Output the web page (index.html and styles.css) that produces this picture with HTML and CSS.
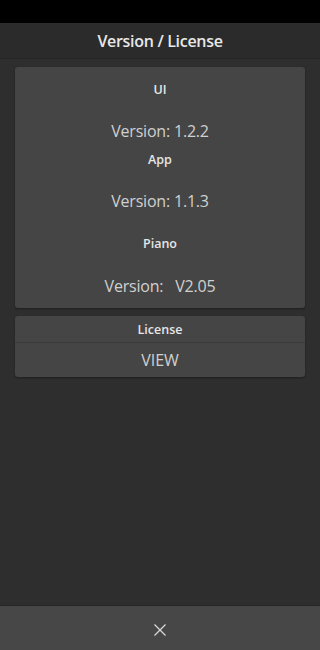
FILE: index.html
```html
<!DOCTYPE html>
<html>
<head>
<meta charset="utf-8">
<meta name="viewport" content="width=device-width, initial-scale=1">
<link rel="stylesheet" href="styles.css">
</head>
<body>
<div class="app">
  <div class="statusbar"></div>
  <header class="header">Version / License</header>
  <main class="content">
    <section class="card versions">
      <div class="label">UI</div>
      <div class="value v-ui">Version: 1.2.2</div>
      <div class="label l-app">App</div>
      <div class="value v-app">Version: 1.1.3</div>
      <div class="label l-piano">Piano</div>
      <div class="value v-piano">Version:&nbsp;&nbsp; V2.05</div>
    </section>
    <section class="card license">
      <div class="license-title">License</div>
      <div class="license-view">VIEW</div>
    </section>
  </main>
  <footer class="footer">
    <svg class="close" width="14" height="14" viewBox="0 0 14 14"><path d="M1.5 1.5 L12.5 12.5 M12.5 1.5 L1.5 12.5" stroke="#d8d8d8" stroke-width="1.3" fill="none"/></svg>
  </footer>
</div>
</body>
</html>
```
FILE: styles.css
```css
html, body {
  margin: 0;
  padding: 0;
  background: #2e2e2e;
}
.app {
  width: 100%;
  height: 650px;
  display: flex;
  flex-direction: column;
  font-family: "Open Sans", "Noto Sans", sans-serif;
  color: #e6e6e6;
}
.statusbar {
  height: 23px;
  background: #000;
  flex: none;
}
.header {
  height: 35px;
  flex: none;
  background: #2b2b2b;
  border-bottom: 1px solid #262626;
  display: flex;
  align-items: center;
  justify-content: center;
  font-size: 16px;
  font-weight: 600;
  color: #e8e8e8;
  letter-spacing: -0.3px;
}
.content {
  flex: 1;
  padding: 8px 15px 0;
  display: flex;
  flex-direction: column;
  gap: 8px;
}
.card {
  background: #454545;
  border-radius: 3px;
  box-shadow: 0 1px 2px rgba(0,0,0,0.35);
}
.versions {
  height: 241px;
  display: flex;
  flex-direction: column;
  align-items: center;
  padding-top: 14px;
  box-sizing: border-box;
}
.label {
  font-size: 12.5px;
  font-weight: 600;
  line-height: 18px;
  color: #e6e6e6;
}
.value {
  font-size: 16px;
  line-height: 22px;
  color: #d0d0d0;
  letter-spacing: -0.2px;
}
.v-ui { margin-top: 21px; }
.l-app { margin-top: 9px; }
.v-app { margin-top: 21px; }
.l-piano { margin-top: 23px; }
.v-piano { margin-top: 22px; }
.license {
  height: 61px;
  display: flex;
  flex-direction: column;
}
.license-title {
  height: 26px;
  border-bottom: 1px solid #3a3a3a;
  display: flex;
  align-items: center;
  justify-content: center;
  font-size: 12.5px;
  font-weight: 600;
  color: #e6e6e6;
}
.license-view {
  flex: 1;
  display: flex;
  align-items: center;
  justify-content: center;
  font-size: 16px;
  color: #d0d0d0;
}
.footer {
  height: 44px;
  flex: none;
  background: #474747;
  display: flex;
  align-items: center;
  justify-content: center;
  border-top: 1px solid #262626;
}
.close { display: block; margin-top: 4px; }
```
